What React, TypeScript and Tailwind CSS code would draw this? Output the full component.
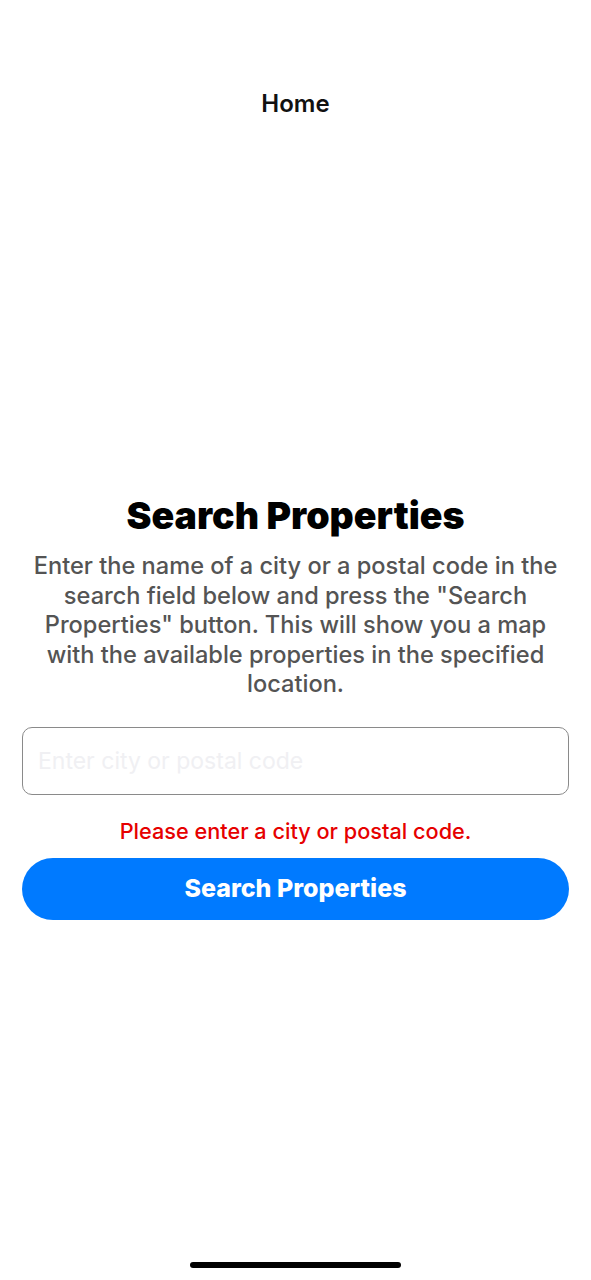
import React from "react";

export default function App() {
  return (
    <div
      className="w-full h-[1280px] bg-white flex flex-col"
      style={{ fontFamily: "Inter, 'Noto Sans', sans-serif" }}
    >
      <div className="pt-[90px] text-center text-[24px] leading-[28px] font-semibold text-[#111]">
        Home
      </div>

      <div className="mt-[376px] px-[22px] flex flex-col">
        <h1 className="text-center text-[37.5px] leading-[44px] font-black text-black">
          Search Properties
        </h1>
        <p className="mt-[13px] text-center text-[23.6px] leading-[29.5px] font-medium text-[#545454]">
          Enter the name of a city or a postal code in the search field below and press the "Search
          Properties" button. This will show you a map with the available properties in the
          specified location.
        </p>
        <input
          className="mt-[28px] h-[68px] w-full rounded-[10px] border border-[#8a8a8a] px-[15px] text-[23px] outline-none placeholder:text-[#f0f0f3]"
          placeholder="Enter city or postal code"
        />
        <div className="mt-[24px] text-center text-[21.7px] leading-[24px] font-medium text-[#e60000]">
          Please enter a city or postal code.
        </div>
        <button className="mt-[15px] h-[62px] w-full rounded-full bg-[#007aff] text-white text-[25px] font-extrabold">
          Search Properties
        </button>
      </div>

      <div className="mt-auto mb-[12px] flex justify-center">
        <div className="w-[211px] h-[6px] rounded-full bg-black" />
      </div>
    </div>
  );
}
